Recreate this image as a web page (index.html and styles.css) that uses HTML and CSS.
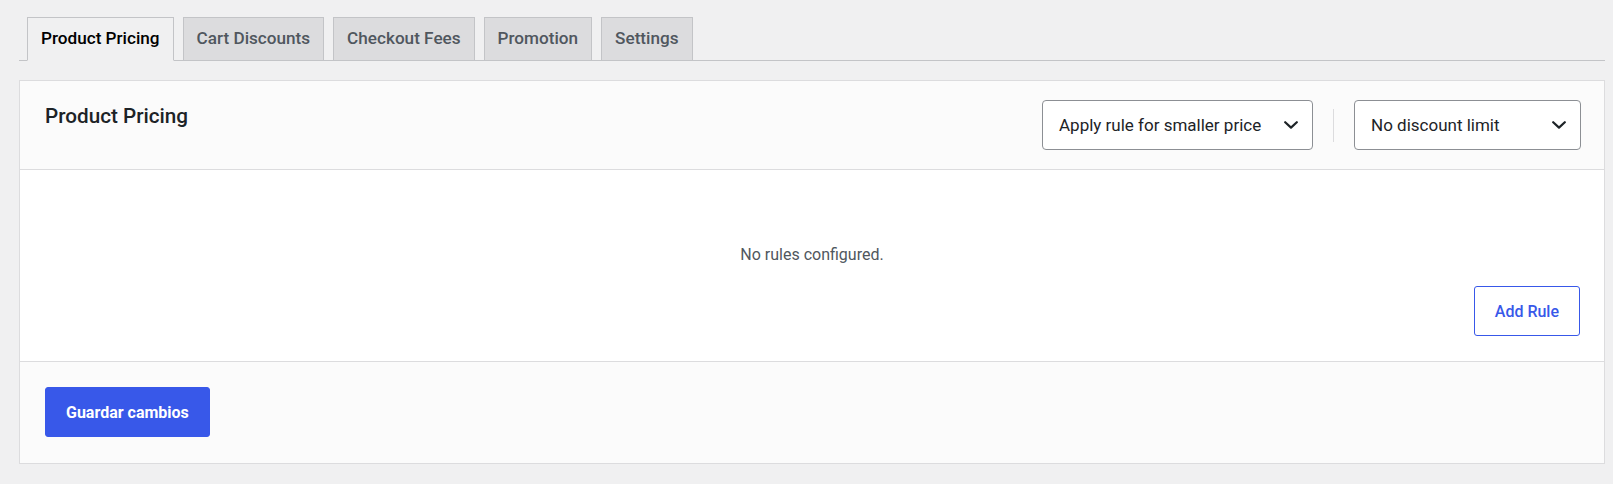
FILE: index.html
```html
<!DOCTYPE html>
<html lang="en">
<head>
<meta charset="utf-8">
<title>Product Pricing</title>
<link rel="stylesheet" href="styles.css">
</head>
<body>
<div class="wrap">
  <nav class="tabs">
    <a class="tab is-active" href="#">Product Pricing</a>
    <a class="tab" href="#">Cart Discounts</a>
    <a class="tab" href="#">Checkout Fees</a>
    <a class="tab" href="#">Promotion</a>
    <a class="tab" href="#">Settings</a>
  </nav>

  <section class="panel">
    <header class="panel-head">
      <h2 class="panel-title">Product Pricing</h2>
      <div class="head-controls">
        <div class="select select-wide">
          <span>Apply rule for smaller price</span>
          <svg class="chevron" width="14" height="8" viewBox="0 0 14 8"><path d="M1.2 1.2L7 6.6l5.8-5.4" fill="none" stroke="#1d2327" stroke-width="2.2" stroke-linecap="round" stroke-linejoin="round"/></svg>
        </div>
        <span class="divider"></span>
        <div class="select select-narrow">
          <span>No discount limit</span>
          <svg class="chevron" width="14" height="8" viewBox="0 0 14 8"><path d="M1.2 1.2L7 6.6l5.8-5.4" fill="none" stroke="#1d2327" stroke-width="2.2" stroke-linecap="round" stroke-linejoin="round"/></svg>
        </div>
      </div>
    </header>

    <div class="panel-body">
      <p class="empty">No rules configured.</p>
      <div class="body-actions">
        <button class="btn btn-outline" type="button">Add Rule</button>
      </div>
    </div>

    <footer class="panel-foot">
      <button class="btn btn-primary" type="button">Guardar cambios</button>
    </footer>
  </section>
</div>
</body>
</html>
```

FILE: styles.css
```css
* {
  box-sizing: border-box;
}

body {
  margin: 0;
  background: #f0f0f1;
  font-family: Roboto, "Liberation Sans", sans-serif;
  color: #1d2327;
}

.wrap {
  padding: 17px 8px 0 19px;
}

/* tab strip */
.tabs {
  display: flex;
  gap: 9px;
  padding-left: 8px;
  border-bottom: 1px solid #c3c4c7;
}

.tab {
  display: block;
  margin-bottom: -1px;
  padding: 8px 13px 10px;
  border: 1px solid #c3c4c7;
  background: #dcdcde;
  color: #50575e;
  font-size: 17.15px;
  font-weight: 500;
  line-height: 24px;
  text-decoration: none;
}

.tab.is-active {
  background: #f0f0f1;
  border-bottom-color: #f0f0f1;
  color: #000;
}

/* settings panel */
.panel {
  margin-top: 19px;
  border: 1px solid #dcdcde;
  background: #fff;
}

.panel-head {
  display: flex;
  justify-content: space-between;
  align-items: flex-start;
  padding: 19px 23px 19px 25px;
  background: #fbfbfb;
  border-bottom: 1px solid #dcdcde;
}

.panel-title {
  margin: 0;
  font-size: 20.7px;
  font-weight: 500;
  line-height: 33px;
  color: #1d2327;
}

.head-controls {
  display: flex;
  align-items: center;
  gap: 20px;
}

.select {
  display: flex;
  align-items: center;
  justify-content: space-between;
  height: 50px;
  padding: 0 14px 0 16px;
  border: 1px solid #8c8f94;
  border-radius: 4px;
  background: #fff;
  font-size: 17px;
  color: #1d2327;
}

.select-wide {
  width: 271px;
}

.select-narrow {
  width: 227px;
}

.chevron {
  flex: none;
}

.divider {
  width: 1px;
  height: 33px;
  background: #dcdcde;
}

.panel-body {
  padding: 24px 24px 25px;
  background: #fff;
}

.empty {
  margin: 0;
  padding-top: 49px;
  text-align: center;
  font-size: 16px;
  line-height: 24px;
  color: #50575e;
}

.body-actions {
  display: flex;
  justify-content: flex-end;
  margin-top: 19px;
}

.panel-foot {
  padding: 25px 24px 26px 25px;
  background: #fbfbfb;
  border-top: 1px solid #dcdcde;
}

/* buttons */
.btn {
  height: 50px;
  padding: 0 20px;
  border-radius: 3px;
  font-family: Roboto, "Liberation Sans", sans-serif;
  font-size: 16px;
  cursor: pointer;
}

.btn-outline {
  border: 1px solid #3858e9;
  background: #fff;
  color: #3858e9;
  font-weight: 500;
}

.btn-primary {
  border: 1px solid #3858e9;
  background: #3858e9;
  color: #fff;
  font-weight: 700;
}
```
